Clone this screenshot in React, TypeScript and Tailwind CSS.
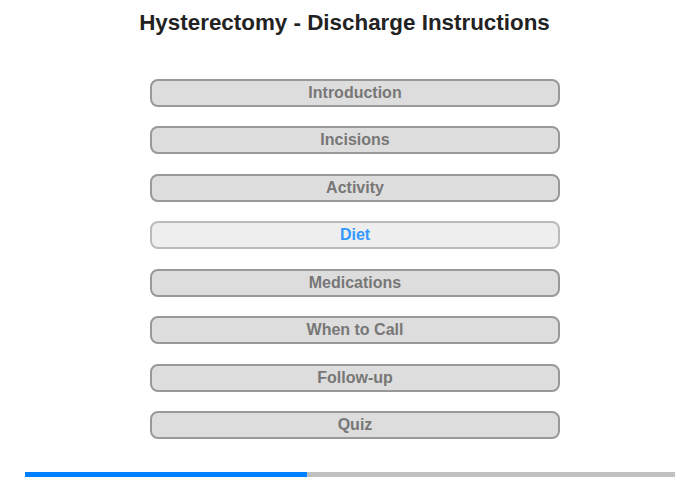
import React from "react";

const sections = [
  "Introduction",
  "Incisions",
  "Activity",
  "Diet",
  "Medications",
  "When to Call",
  "Follow-up",
  "Quiz",
];

const App = () => {
  const active = "Diet";
  return (
    <div className="w-[700px] h-[480px] bg-white font-['Liberation_Sans',Arial,sans-serif] flex flex-col items-center">
      <h1 className="mt-[10px] w-full pr-[11px] text-center h-[26px] leading-[26px] text-[22.4px] font-bold text-[#222]">
        Hysterectomy - Discharge Instructions
      </h1>
      <div className="mt-[43px] ml-[10px] flex flex-col gap-[19.45px] w-[410px]">
        {sections.map((s) =>
          s === active ? (
            <div
              key={s}
              className="h-[28px] rounded-[8px] border-2 border-[#bbb] bg-[#eee] flex items-center justify-center text-[16px] font-bold text-[#3399ff] cursor-pointer"
            >
              {s}
            </div>
          ) : (
            <div
              key={s}
              className="h-[28px] rounded-[8px] border-2 border-[#999] bg-[#ddd] flex items-center justify-center text-[16px] font-bold text-[#777] cursor-pointer"
            >
              {s}
            </div>
          )
        )}
      </div>
      <div className="mt-[33px] w-[650px] h-[5px] bg-[#c0c0c0] flex">
        <div className="h-full bg-[#0080ff]" style={{ width: `${(282 / 650) * 100}%` }}></div>
      </div>
    </div>
  );
};

export default App;
